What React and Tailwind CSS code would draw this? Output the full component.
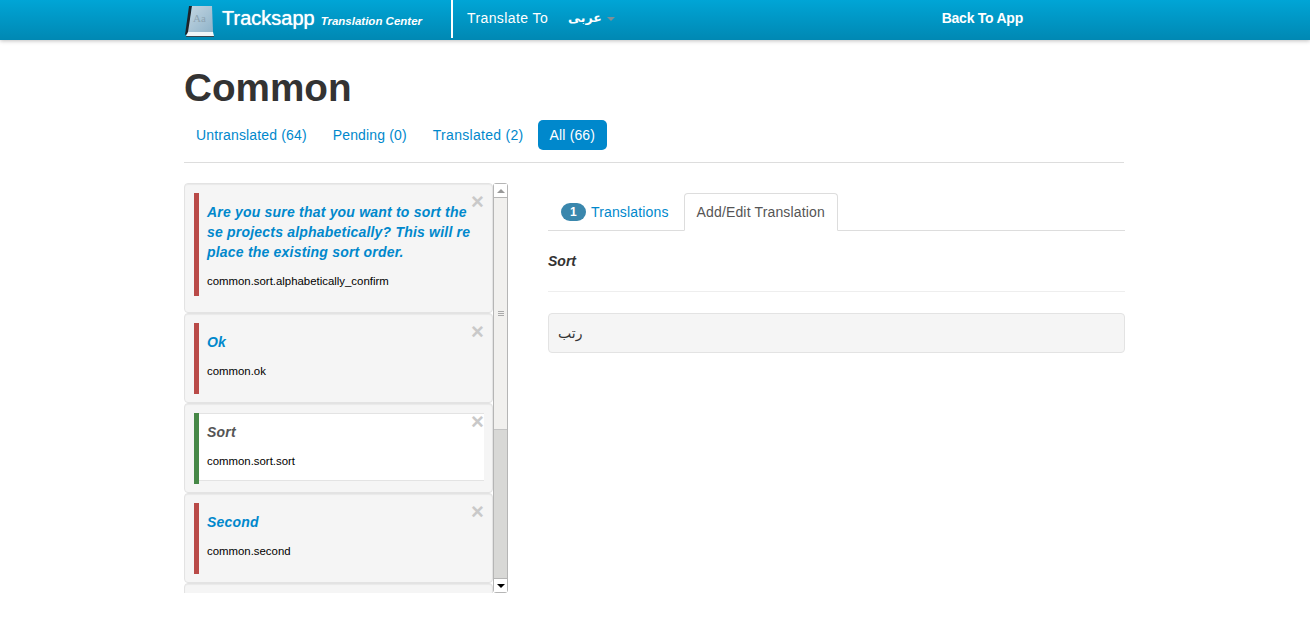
import React from 'react';

const BookLogo = () => (
	<svg width="30" height="32" viewBox="0 0 30 32" className="shrink-0">
		<defs>
			<linearGradient id="cover" x1="0" y1="0" x2="1" y2="1">
				<stop offset="0" stopColor="#c4d6e2" />
				<stop offset="1" stopColor="#8fb3c9" />
			</linearGradient>
		</defs>
		<path d="M4 1 L7 1 L4 28 L0 30 Z" fill="#1d2228" />
		<path d="M7 1 L27 1 L28 27 L3 27 Z" fill="url(#cover)" />
		<path d="M3 27 L28 27 L29 31 L1 31 Z" fill="#f1f5f7" />
		<path d="M1 31 L29 31 L29 32 L1 32 Z" fill="#39464f" />
		<text x="8" y="17" fontFamily="Liberation Serif, serif" fontSize="11" fill="#8da3b1">Aa</text>
	</svg>
);

const cards = [
	{ title: 'Are you sure that you want to sort these projects alphabetically? This will replace the existing sort order.', keyName: 'common.sort.alphabetically_confirm', pb: 'pb-[16px]', barH: 'h-[103px]' },
	{ title: 'Ok', keyName: 'common.ok', pb: 'pb-[8px]', barH: 'h-[71px]' },
	{ title: 'Sort', keyName: 'common.sort.sort', pb: 'pb-[8px]', barH: 'h-[71px]', active: true },
	{ title: 'Second', keyName: 'common.second', pb: 'pb-[8px]', barH: 'h-[71px]' },
	{ title: 'Next', keyName: 'common.next', pb: 'pb-[8px]', barH: 'h-[71px]' },
];

const Card = ({ card }) => (
	<div className={`relative bg-[#f5f5f5] border border-[#e3e3e3] rounded-[4px] pl-[9px] pr-[8px] pt-[9px] ${card.pb} shadow-[inset_0_1px_1px_rgba(0,0,0,0.05)]`}>
		<div className={`flex ${card.barH}`}>
			<div className={`w-[5px] shrink-0 ${card.active ? 'bg-[#468847]' : 'bg-[#b94a48]'}`} />
			<div className={`flex-1 min-w-0 pl-[8px] pr-[11px] ${card.active ? 'bg-white border-t border-b border-[#e3e3e3] h-[68px]' : ''}`}>
				<div className={`${card.active ? 'mt-[8px]' : 'mt-[9px]'} text-[14px] leading-[20px] font-bold italic tracking-[0.2px] break-all ${card.active ? 'text-[#555555]' : 'text-[#0088cc]'}`}>
					{card.title}
				</div>
				<div className="mt-[9px] text-[11.4px] leading-[20px] tracking-normal text-black">{card.keyName}</div>
			</div>
		</div>
		<span className="absolute right-[8px] top-[8px] text-[22px] leading-[20px] font-bold text-[#c9c9c9]">×</span>
	</div>
);

const App = () => {
	return (
		<div className="min-h-[644px] bg-white text-[14px] leading-[20px] tracking-[0.15px] text-[#333333] font-['Liberation_Sans',Arial,sans-serif]">
			<div className="h-[40px] bg-gradient-to-b from-[#00a5d6] to-[#0088b3] shadow-[0_1px_4px_rgba(0,0,0,0.25)] text-white">
				<div className="ml-[184px] w-[940px] h-full flex">
					<div className="w-[267px] flex items-center pl-[1px] pt-[1px]">
						<BookLogo />
						<span className="ml-[7px] text-[20px] leading-[30px] tracking-normal -mt-[5px] [text-shadow:0_0_1px_#ffffff]">Tracksapp</span>
						<span className="ml-[6px] text-[11.5px] font-bold italic tracking-normal">Translation Center</span>
					</div>
					<div className="w-[2px] h-[38px] bg-white" />
					<div className="ml-[14px] pt-[8px] tracking-[0.4px]">Translate To</div>
					<div className="ml-[20px] pt-[8px] flex font-bold text-[12.5px] tracking-normal font-['DejaVu_Sans',sans-serif]">
						<span>عربى</span>
						<span className="ml-[5px] mt-[9px] w-0 h-0 border-x-[4px] border-x-transparent border-t-[4px] border-t-[#7f8f96]" />
					</div>
					<div className="ml-[327px] pt-[8px] font-bold tracking-[-0.25px]">Back To App</div>
				</div>
			</div>

			<div className="ml-[184px] w-[941px]">
				<h1 className="mt-[22px] text-[38.7px] leading-[52px] tracking-normal font-bold text-[#333333]">Common</h1>
				<div className="mt-[6px] pb-[12px] border-b border-[#dddddd] w-[940px] flex gap-[2px]">
					<a className="px-[12px] py-[5px] rounded-[5px] text-[#0088cc]">Untranslated (64)</a>
					<a className="px-[12px] py-[5px] rounded-[5px] text-[#0088cc]">Pending (0)</a>
					<a className="px-[12px] py-[5px] rounded-[5px] text-[#0088cc] tracking-[0.3px]">Translated (2)</a>
					<a className="px-[12px] py-[5px] rounded-[5px] bg-[#0088cc] text-white">All (66)</a>
				</div>

				<div className="mt-[20px] flex">
					<div className="w-[325px] h-[410px] shrink-0 flex overflow-hidden">
						<div className="w-[309px] shrink-0">
							{cards.map((card) => (
								<Card key={card.keyName} card={card} />
							))}
						</div>
						<div className="w-[15px] h-full border border-[#b5b5b5] rounded-[3px] flex flex-col bg-[#d8d8d6]">
							<div className="h-[14px] bg-white border-b border-[#b5b5b5] flex items-center justify-center">
								<span className="w-0 h-0 border-x-[4px] border-x-transparent border-b-[4px] border-b-[#999999]" />
							</div>
							<div className="h-[232px] bg-[#f1f0ee] flex flex-col items-center justify-center gap-[1px] border-b border-[#c4c4c4]">
								<span className="w-[6px] h-px bg-[#aaaaaa]" />
								<span className="w-[6px] h-px bg-[#aaaaaa]" />
								<span className="w-[6px] h-px bg-[#aaaaaa]" />
							</div>
							<div className="flex-1" />
							<div className="h-[14px] bg-white border-t border-[#b5b5b5] flex items-center justify-center">
								<span className="w-0 h-0 border-x-[4px] border-x-transparent border-t-[4px] border-t-black" />
							</div>
						</div>
					</div>

					<div className="ml-[39px] w-[577px] pt-[10px]">
						<div className="flex h-[38px] border-b border-[#dddddd]">
							<div className="flex items-center pl-[13px] pr-[15px] h-[37px] text-[#0088cc]">
								<span className="w-[25px] h-[18px] rounded-[9px] bg-[#3a87ad] text-white text-[12px] font-bold flex items-center justify-center">1</span>
								<span className="ml-[5px]">Translations</span>
							</div>
							<div className="h-[38px] px-[12px] flex items-center bg-white border border-[#dddddd] border-b-white rounded-t-[4px] text-[#555555]">
								Add/Edit Translation
							</div>
						</div>
						<div className="mt-[20px] font-bold italic tracking-normal text-[#333333]">Sort</div>
						<div className="mt-[20px] border-t border-[#eeeeee]" />
						<div className="mt-[21px] h-[40px] bg-[#f5f5f5] border border-[#e3e3e3] rounded-[4px] pl-[9px] flex items-center font-['DejaVu_Sans',sans-serif] text-[#333333] text-[14px] tracking-normal">
							رتب
						</div>
					</div>
				</div>
			</div>
		</div>
	);
};

export default App;
